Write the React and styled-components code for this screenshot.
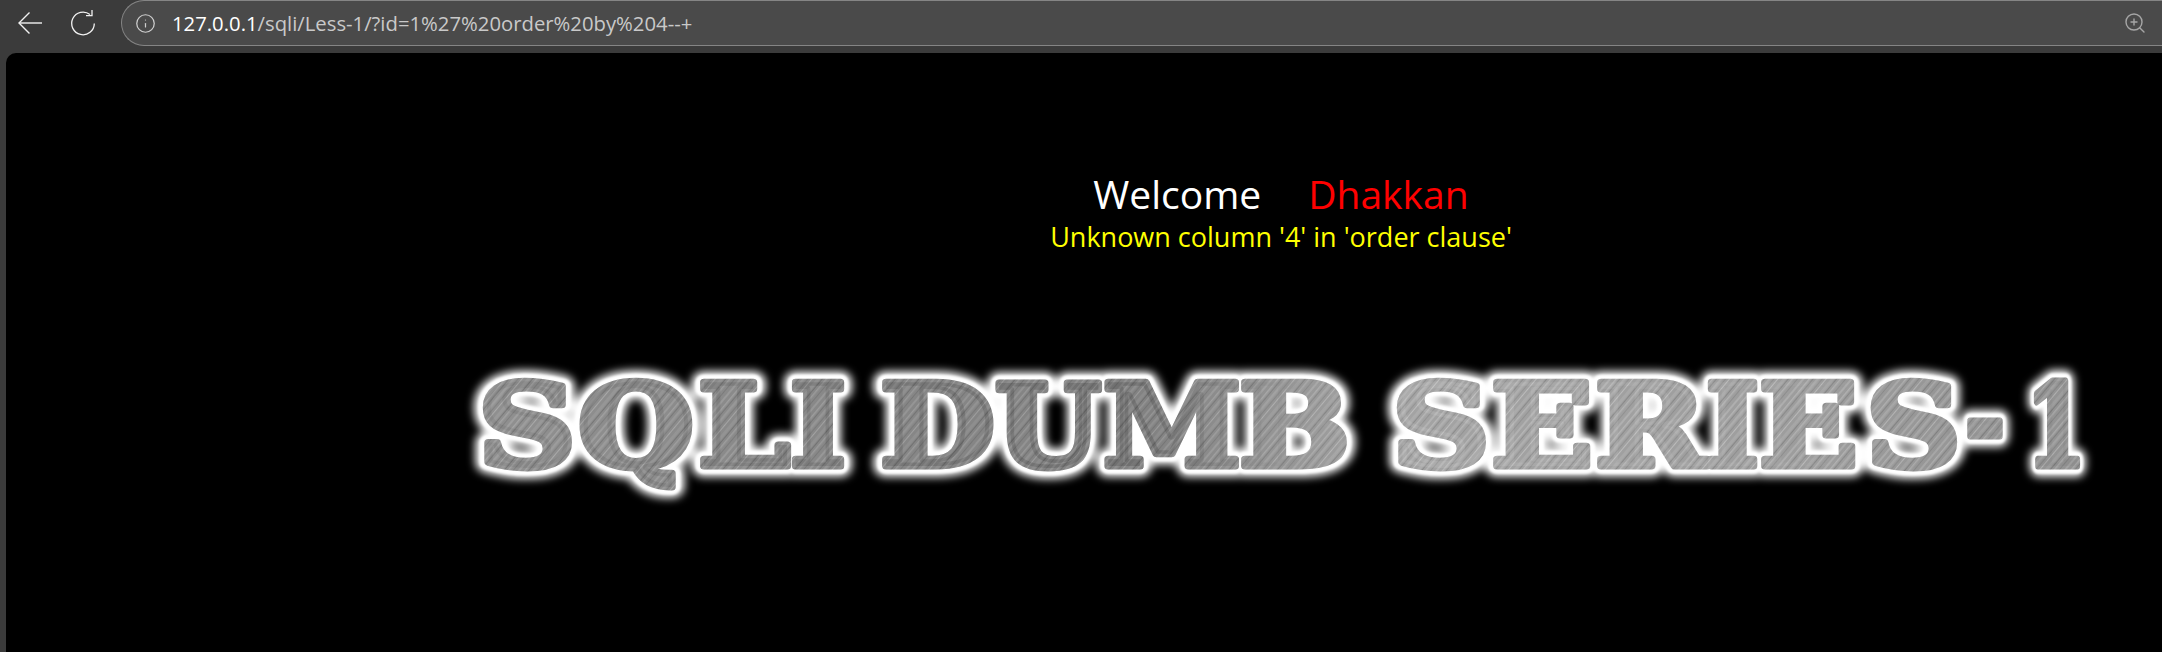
import React from 'react'
import styled, { createGlobalStyle } from 'styled-components'
import { Info, ZoomIn } from 'lucide-react'

const GlobalStyle = createGlobalStyle`
    html, body {
        margin: 0;
        padding: 0;
        height: 100%;
        overflow: hidden;
        background: #3b3b3b;
    }
`

// gray body of every banner letter, measured on the reference
const letters = [
    ['S', 478, 98], ['Q', 578, 116], ['L', 698, 92], ['I', 790, 56],
    ['D', 880, 115], ['U', 995, 106], ['M', 1103, 138], ['B', 1239, 111],
    ['S', 1392, 98], ['E', 1491, 102], ['R', 1595, 111], ['I', 1706, 53],
    ['E', 1759, 99], ['S', 1866, 95], ['-', 1965, 40], ['1', 2026, 60],
]

// irregular scratches, y and height inside one pattern tile
const scratches = [
    [1, 1.5, '#b0b0b0'], [4, 1, '#848484'], [7, 2.5, '#a8a8a8'], [11, 1, '#8a8a8a'],
    [14, 1, '#b6b6b6'], [18, 3, '#a3a3a3'], [22, 1, '#808080'], [25, 1.5, '#aeaeae'],
    [29, 1, '#888'], [33, 2, '#aaa'],
]

function BannerText({ ...rest }) {
    return (
        <g {...rest}>
            {letters.map(([ch, x, w], i) => (
                <text
                    key={i}
                    x={x}
                    y={ch === '-' ? 459 : 466}
                    textLength={w}
                    lengthAdjust="spacingAndGlyphs"
                >
                    {ch}
                </text>
            ))}
        </g>
    )
}

function Banner() {
    return (
        <BannerSvg viewBox="460 350 1650 170" role="img" aria-label="SQLI DUMB SERIES-1">
            <defs>
                <pattern id="hatch" width="37" height="37" patternUnits="userSpaceOnUse" patternTransform="rotate(-50)">
                    <rect width="37" height="37" fill="#999" />
                    {scratches.map(([y, h, c]) => (
                        <rect key={y} y={y} width="37" height={h} fill={c} />
                    ))}
                </pattern>
                <linearGradient id="shade" gradientUnits="userSpaceOnUse" x1="479" y1="0" x2="2085" y2="0">
                    <stop offset="0" stopColor="#000" stopOpacity=".06" />
                    <stop offset=".25" stopColor="#000" stopOpacity=".12" />
                    <stop offset=".42" stopColor="#000" stopOpacity=".15" />
                    <stop offset=".58" stopColor="#fff" stopOpacity=".1" />
                    <stop offset=".8" stopColor="#fff" stopOpacity=".05" />
                    <stop offset="1" stopColor="#000" stopOpacity=".04" />
                </linearGradient>
                <filter id="glow" x="-5%" y="-30%" width="110%" height="160%">
                    <feGaussianBlur stdDeviation="4" />
                </filter>
                <filter id="soft" x="-5%" y="-30%" width="110%" height="160%">
                    <feGaussianBlur stdDeviation="1" />
                </filter>
            </defs>
            <GlowLayer filter="url(#glow)" />
            <OutlineLayer filter="url(#soft)" />
            <BodyLayer />
            <ShadeLayer />
        </BannerSvg>
    )
}

export default function App() {
    return (
        <Shell>
            <GlobalStyle />
            <Toolbar>
                <NavButton>
                    <svg width="26" height="24" viewBox="0 0 26 24" fill="none" stroke="currentColor" strokeWidth="1.4">
                        <path d="M25 12 H2" />
                        <path d="M12.5 1.5 L2 12 L12.5 22.5" />
                    </svg>
                </NavButton>
                <NavButton>
                    <svg width="28" height="28" viewBox="0 0 28 28" fill="none" stroke="currentColor" strokeWidth="1.3">
                        <path d="M21 5.6 A11.3 11.3 0 1 0 25.3 14.5" />
                        <path d="M23 1 V6.6 H17" />
                    </svg>
                </NavButton>
                <AddressBar>
                    <InfoIcon>
                        <Info size={21} strokeWidth={1.4} />
                    </InfoIcon>
                    <Url>
                        <b>127.0.0.1</b>/sqli/Less-1/?id=1%27%20order%20by%204--+
                    </Url>
                    <ZoomIcon>
                        <ZoomIn size={24} strokeWidth={1.4} />
                    </ZoomIcon>
                </AddressBar>
            </Toolbar>
            <Page>
                <Message>
                    <Welcome>
                        Welcome<Name>Dhakkan</Name>
                    </Welcome>
                    <ErrorText>Unknown column '4' in 'order clause'</ErrorText>
                </Message>
                <Banner />
            </Page>
        </Shell>
    )
}

const Shell = styled.div`
    width: 2162px;
    height: 652px;
    display: flex;
    flex-direction: column;
    overflow: hidden;
    background: #3b3b3b;
    font-family: 'Open Sans', 'Noto Sans', sans-serif;
`

const Toolbar = styled.div`
    height: 53px;
    flex: none;
    display: flex;
    align-items: flex-start;
    padding-left: 17px;
    box-sizing: border-box;
`

const NavButton = styled.div`
    width: 52px;
    height: 46px;
    display: flex;
    align-items: center;
    color: #f2f2f2;
    flex: none;
`

const AddressBar = styled.div`
    flex: 1;
    height: 46px;
    box-sizing: border-box;
    display: flex;
    align-items: center;
    background: #4a4a4a;
    border: 1.5px solid #858585;
    border-right: none;
    border-radius: 24px 0 0 24px;
    padding-left: 13px;
`

const InfoIcon = styled.div`
    display: flex;
    color: #d0d0d0;
    flex: none;
`

const Url = styled.div`
    margin-left: 16px;
    font-size: 20.3px;
    color: #c9c9c9;
    white-space: nowrap;
    & b {
        font-weight: 400;
        color: #fff;
    }
`

const ZoomIcon = styled.div`
    margin-left: auto;
    margin-right: 15px;
    display: flex;
    color: #a6a6a6;
`

const Page = styled.div`
    flex: 1;
    margin-left: 6px;
    background: #000;
    border-radius: 10px 0 0 0;
    min-height: 0;
`

const Message = styled.div`
    padding: 116px 0 0 394px;
    text-align: center;
`

const Welcome = styled.div`
    font-size: 39px;
    line-height: 50px;
    color: #fff;
`

const Name = styled.span`
    color: #f00;
    margin-left: 47px;
`

const ErrorText = styled.div`
    font-size: 27px;
    line-height: 36px;
    color: #ff0;
`

const BannerSvg = styled.svg`
    display: block;
    width: 1650px;
    height: 170px;
    margin: 95px 0 0 454px;
`

const BaseLayer = styled(BannerText)`
    font-family: 'DejaVu Serif', 'Liberation Serif', serif;
    font-weight: 700;
    font-size: 114px;
    stroke-linejoin: round;
`

const GlowLayer = styled(BaseLayer)`
    fill: #fff;
    stroke: #fff;
    stroke-width: 22px;
`

const OutlineLayer = styled(BaseLayer)`
    fill: #fff;
    stroke: #fff;
    stroke-width: 15px;
`

const BodyLayer = styled(BaseLayer)`
    fill: url(#hatch);
    stroke: url(#hatch);
    stroke-width: 7px;
`

const ShadeLayer = styled(BaseLayer)`
    fill: url(#shade);
    stroke: url(#shade);
    stroke-width: 7px;
`
